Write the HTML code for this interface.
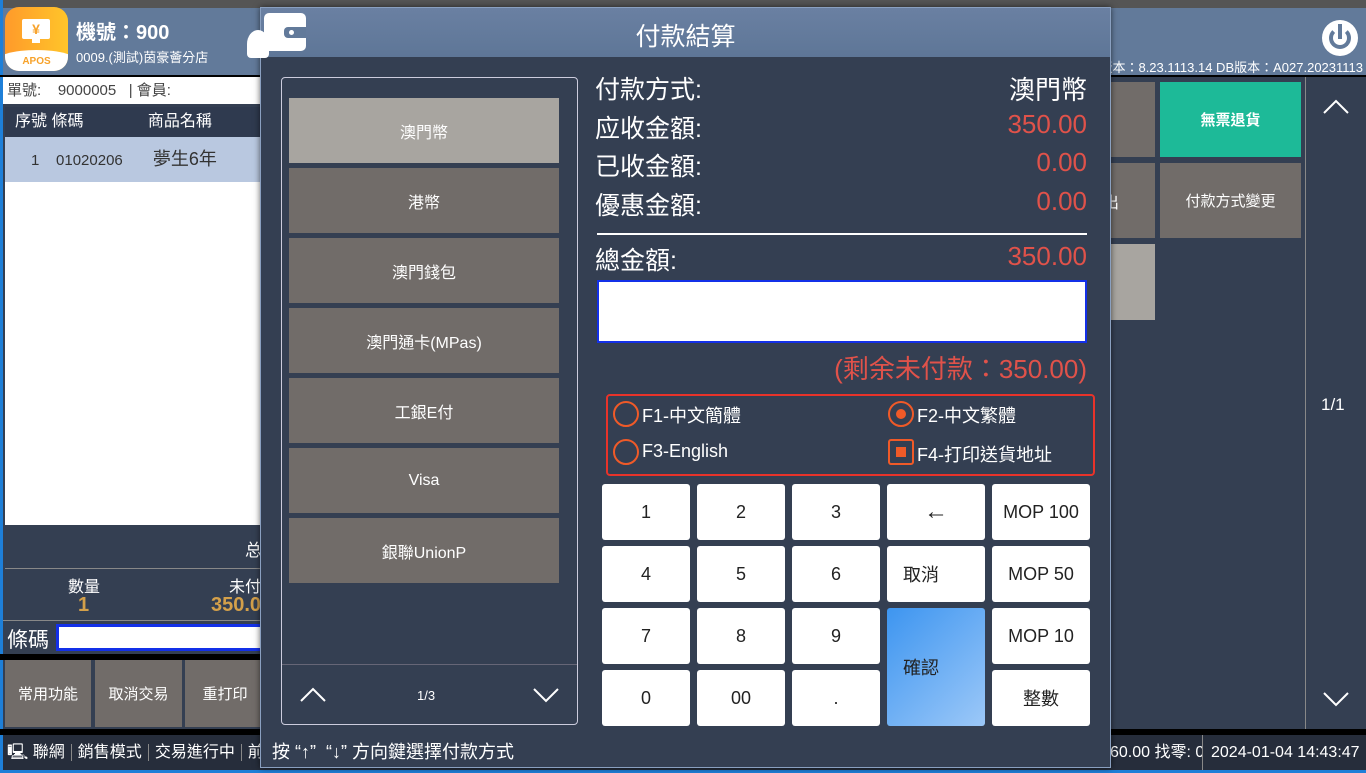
<!DOCTYPE html>
<html><head><meta charset="utf-8"><style>
*{margin:0;padding:0;box-sizing:border-box}
body{width:1366px;height:773px;overflow:hidden;background:#343f52;font-family:"Liberation Sans","Noto Sans CJK TC",sans-serif;position:relative;color:#fff}
.a{position:absolute}
.btn{position:absolute;background:#716c69;color:#fff;display:flex;align-items:center;justify-content:center;font-size:16px}
.k{position:absolute;background:#fff;color:#222;border-radius:3px;display:flex;align-items:center;justify-content:center;font-size:18px}
.lb{position:absolute;left:595px;font-size:25px;color:#fff}
.vl{position:absolute;right:279px;font-size:26px;color:#e0524a}
</style></head><body>
<div class="a" style="left:0;top:0;width:1366px;height:8px;background:#555"></div>
<div class="a" style="left:0;top:8px;width:1366px;height:67px;background:#627a9a"></div>
<div class="a" style="left:0;top:0;width:3px;height:773px;background:#1e7fd8"></div>
<div class="a" style="left:0;top:770px;width:1366px;height:3px;background:#1e7fd8"></div>
<div class="a" style="left:5px;top:7px;width:63px;height:64px;border-radius:14px;background:linear-gradient(90deg,#ff9a2a,#ffc52a);overflow:hidden">
 <div class="a" style="left:17px;top:12px;width:28px;height:20px;background:#fff;border-radius:2px;color:#f7a22a;font-size:14px;font-weight:bold;text-align:center;line-height:20px">¥</div>
 <div class="a" style="left:27px;top:32px;width:8px;height:4px;background:#fff"></div>
 <div class="a" style="left:-10px;top:43px;width:83px;height:40px;background:#fff;border-radius:50% 50% 0 0/30% 30% 0 0"></div>
 <div class="a" style="left:0;top:49px;width:63px;text-align:center;font-size:10px;font-weight:bold;color:#f7a22a">APOS</div>
</div>
<div class="a" style="left:76px;top:16px;font-size:20px;font-weight:bold">機號：900</div>
<div class="a" style="left:76px;top:47px;font-size:13px">0009.(測試)茵豪薈分店</div>
<div class="a" style="left:0;top:75px;width:1366px;height:2px;background:#000"></div>
<div class="a" style="left:3px;top:77px;width:258px;height:27px;background:#fff;color:#444;font-size:15px;line-height:27px;padding-left:4px">單號: &nbsp;&nbsp;&nbsp;9000005 &nbsp;&nbsp;| 會員:</div>
<div class="a" style="left:5px;top:107px;width:256px;height:30px;background:#2f3a4f;font-size:16px;line-height:30px;padding-left:10px">序號 條碼 <span style="margin-left:60px">商品名稱</span></div>
<div class="a" style="left:5px;top:137px;width:256px;height:45px;background:#b9c8e0;color:#333;font-size:15px;line-height:45px;padding-left:26px">1 &nbsp;&nbsp;&nbsp;01020206 <span style="font-size:18px;margin-left:26px">夢生6年</span></div>
<div class="a" style="left:5px;top:182px;width:256px;height:343px;background:#fff"></div>
<div class="a" style="left:245px;top:536px;font-size:17px">总</div>
<div class="a" style="left:5px;top:568px;width:256px;height:1px;background:#888"></div>
<div class="a" style="left:68px;top:573px;font-size:16px">數量</div>
<div class="a" style="left:78px;top:594px;font-size:20px;font-weight:bold;color:#d4a04a">1</div>
<div class="a" style="left:229px;top:573px;font-size:16px">未付</div>
<div class="a" style="left:211px;top:594px;font-size:20px;font-weight:bold;color:#d4a04a">350.0</div>
<div class="a" style="left:3px;top:620px;width:258px;height:1px;background:#888"></div>
<div class="a" style="left:7px;top:624px;font-size:21px">條碼</div>
<div class="a" style="left:56px;top:624px;width:210px;height:27px;background:#fff;border:3px solid #1330e8"></div>
<div class="a" style="left:0;top:654px;width:266px;height:6px;background:#000"></div>
<div class="btn" style="left:5px;top:660px;width:86px;height:67px;font-size:15px">常用功能</div>
<div class="btn" style="left:95px;top:660px;width:87px;height:67px;font-size:15px">取消交易</div>
<div class="btn" style="left:185px;top:660px;width:80px;height:67px;font-size:15px">重打印</div>
<div class="a" style="left:0;top:729px;width:1366px;height:6px;background:#000"></div>
<div class="a" style="left:3px;top:735px;width:1363px;height:35px;background:#262d3b;font-size:16px;line-height:35px;white-space:nowrap">
 <span style="padding-left:4px">🖳 聯網</span><span style="border-left:1px solid #888;padding:0 6px;margin-left:6px">銷售模式</span><span style="border-left:1px solid #888;padding:0 6px">交易進行中</span><span style="border-left:1px solid #888;padding:0 6px">前臺</span>
</div>
<div class="a" style="left:1110px;top:735px;height:35px;line-height:35px;font-size:16px;white-space:nowrap">60.00 找零: 0</div>
<div class="a" style="left:1202px;top:735px;width:164px;height:35px;background:#262d3b;border-left:1px solid #888;line-height:35px;font-size:16px;padding-left:8px">2024-01-04 14:43:47</div>
<!-- right back -->
<div class="a" style="right:3px;top:57px;font-size:13px;white-space:nowrap">版本：8.23.1113.14 DB版本：A027.20231113</div>
<div class="a" style="left:1322px;top:20px;width:36px;height:36px;border-radius:50%;background:#fff"><div class="a" style="left:7px;top:7px;width:22px;height:22px;border-radius:50%;border:4px solid #627a9a;border-top-color:transparent"></div><div class="a" style="left:16px;top:4px;width:4px;height:15px;background:#627a9a"></div></div>
<div class="btn" style="left:1090px;top:82px;width:65px;height:75px"></div>
<div class="btn" style="left:1160px;top:82px;width:141px;height:75px;background:#1dba98;font-weight:bold;font-size:15px">無票退貨</div>
<div class="btn" style="left:1090px;top:163px;width:65px;height:75px;justify-content:flex-start;padding-left:13px">出</div>
<div class="btn" style="left:1160px;top:163px;width:141px;height:75px;font-size:15px">付款方式變更</div>
<div class="btn" style="left:1090px;top:244px;width:65px;height:76px;background:#a8a5a0"></div>
<div class="a" style="left:1305px;top:77px;width:1px;height:652px;background:#888"></div>
<svg class="a" style="left:1322px;top:98px" width="28" height="18"><path d="M2 15L14 3L26 15" stroke="#fff" stroke-width="2" fill="none"/></svg>
<div class="a" style="left:1321px;top:395px;font-size:17px">1/1</div>
<svg class="a" style="left:1322px;top:690px" width="28" height="18"><path d="M2 3L14 15L26 3" stroke="#fff" stroke-width="2" fill="none"/></svg>
<!-- modal -->
<div class="a" style="left:260px;top:7px;width:851px;height:761px;background:#343f52;border:1px solid #8aa0c0;box-shadow:0 0 6px rgba(0,0,0,.6)"></div>
<div class="a" style="left:261px;top:8px;width:849px;height:49px;background:linear-gradient(#6a80a2,#5e7697)"></div>
<div class="a" style="left:261px;top:17px;width:849px;text-align:center;font-size:25px">付款結算</div>
<div class="a" style="left:247px;top:30px;width:22px;height:28px;border-radius:50% 50% 4px 4px;background:#fff"></div>
<div class="a" style="left:264px;top:13px;width:42px;height:38px;background:#fff;border-radius:5px"><div class="a" style="left:20px;top:14px;width:22px;height:11px;background:#627a9a;border-radius:4px 0 0 4px"></div><div class="a" style="left:25px;top:17px;width:5px;height:5px;background:#fff;border-radius:50%"></div></div>
<div class="a" style="left:281px;top:77px;width:297px;height:648px;border:1px solid #ccd;border-radius:4px"></div>
<div class="btn" style="left:289px;top:98px;width:270px;height:65px;background:#a8a5a0">澳門幣</div>
<div class="btn" style="left:289px;top:168px;width:270px;height:65px">港幣</div>
<div class="btn" style="left:289px;top:238px;width:270px;height:65px">澳門錢包</div>
<div class="btn" style="left:289px;top:308px;width:270px;height:65px">澳門通卡(MPas)</div>
<div class="btn" style="left:289px;top:378px;width:270px;height:65px">工銀E付</div>
<div class="btn" style="left:289px;top:448px;width:270px;height:65px">Visa</div>
<div class="btn" style="left:289px;top:518px;width:270px;height:65px">銀聯UnionP</div>
<div class="a" style="left:282px;top:664px;width:295px;height:1px;background:#667"></div>
<svg class="a" style="left:299px;top:686px" width="28" height="18"><path d="M2 15L14 3L26 15" stroke="#fff" stroke-width="2" fill="none"/></svg>
<div class="a" style="left:417px;top:688px;font-size:13px">1/3</div>
<svg class="a" style="left:532px;top:686px" width="28" height="18"><path d="M2 3L14 15L26 3" stroke="#fff" stroke-width="2" fill="none"/></svg>
<div class="a" style="left:272px;top:738px;font-size:18px">按 “↑” &nbsp;“↓” 方向鍵選擇付款方式</div>
<div class="lb" style="top:70px">付款方式:</div><div class="vl" style="top:70px;color:#fff">澳門幣</div>
<div class="lb" style="top:109px">应收金額:</div><div class="vl" style="top:109px">350.00</div>
<div class="lb" style="top:147px">已收金額:</div><div class="vl" style="top:147px">0.00</div>
<div class="lb" style="top:186px">優惠金額:</div><div class="vl" style="top:186px">0.00</div>
<div class="a" style="left:597px;top:233px;width:490px;height:2px;background:#fff"></div>
<div class="lb" style="top:241px">總金額:</div><div class="vl" style="top:241px">350.00</div>
<div class="a" style="left:597px;top:280px;width:490px;height:63px;background:#fff;border:2px solid #1330e8"></div>
<div class="vl" style="top:349px">(剩余未付款：350.00)</div>
<div class="a" style="left:606px;top:394px;width:489px;height:82px;border:2px solid #e8332a;border-radius:4px"></div>
<div class="a" style="left:613px;top:401px;width:26px;height:26px;border:2px solid #f05a28;border-radius:50%"></div>
<div class="a" style="left:642px;top:402px;font-size:18px">F1-中文簡體</div>
<div class="a" style="left:888px;top:401px;width:26px;height:26px;border:2px solid #f05a28;border-radius:50%"><div class="a" style="left:6px;top:6px;width:10px;height:10px;border-radius:50%;background:#f05a28"></div></div>
<div class="a" style="left:917px;top:402px;font-size:18px">F2-中文繁體</div>
<div class="a" style="left:613px;top:439px;width:26px;height:26px;border:2px solid #f05a28;border-radius:50%"></div>
<div class="a" style="left:642px;top:441px;font-size:18px">F3-English</div>
<div class="a" style="left:888px;top:439px;width:26px;height:26px;border:2px solid #f05a28;border-radius:3px"><div class="a" style="left:6px;top:6px;width:10px;height:10px;background:#f05a28"></div></div>
<div class="a" style="left:917px;top:441px;font-size:18px">F4-打印送貨地址</div>
<div class="k" style="left:602px;top:484px;width:88px;height:56px">1</div>
<div class="k" style="left:697px;top:484px;width:88px;height:56px">2</div>
<div class="k" style="left:792px;top:484px;width:88px;height:56px">3</div>
<div class="k" style="left:887px;top:484px;width:98px;height:56px;font-size:24px">←</div>
<div class="k" style="left:992px;top:484px;width:98px;height:56px">MOP 100</div>
<div class="k" style="left:602px;top:546px;width:88px;height:56px">4</div>
<div class="k" style="left:697px;top:546px;width:88px;height:56px">5</div>
<div class="k" style="left:792px;top:546px;width:88px;height:56px">6</div>
<div class="k" style="left:887px;top:546px;width:98px;height:56px;justify-content:flex-start;padding-left:16px">取消</div>
<div class="k" style="left:992px;top:546px;width:98px;height:56px">MOP 50</div>
<div class="k" style="left:602px;top:608px;width:88px;height:56px">7</div>
<div class="k" style="left:697px;top:608px;width:88px;height:56px">8</div>
<div class="k" style="left:792px;top:608px;width:88px;height:56px">9</div>
<div class="k" style="left:887px;top:608px;width:98px;height:118px;background:linear-gradient(135deg,#3d95f0,#9cc8f8);justify-content:flex-start;padding-left:16px">確認</div>
<div class="k" style="left:992px;top:608px;width:98px;height:56px">MOP 10</div>
<div class="k" style="left:602px;top:670px;width:88px;height:56px">0</div>
<div class="k" style="left:697px;top:670px;width:88px;height:56px">00</div>
<div class="k" style="left:792px;top:670px;width:88px;height:56px">.</div>
<div class="k" style="left:992px;top:670px;width:98px;height:56px">整數</div>
</body></html>
